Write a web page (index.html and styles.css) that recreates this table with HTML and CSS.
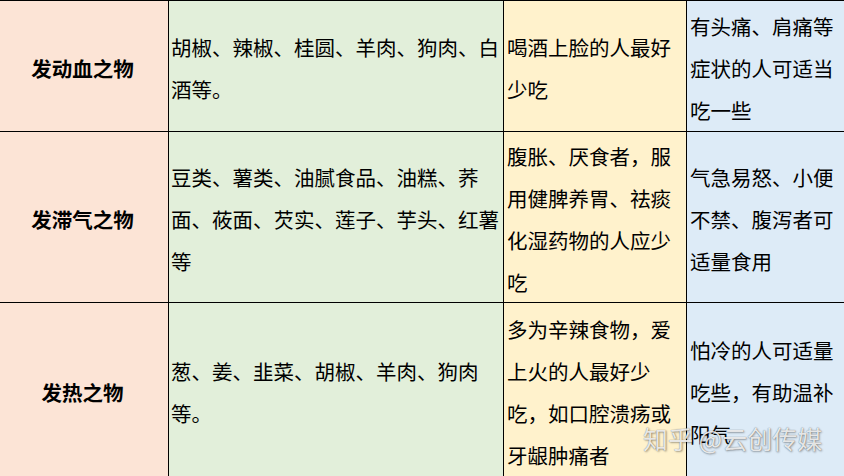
FILE: index.html
```html
<!DOCTYPE html>
<html lang="zh-CN">
<head>
<meta charset="utf-8">
<title>发物表</title>
<link rel="stylesheet" href="styles.css">
</head>
<body>
<div class="sheet">
  <div class="grid">
    <div class="cell c1 head">发动血之物</div>
    <div class="cell c2">胡椒、辣椒、桂圆、羊肉、狗肉、白酒等。</div>
    <div class="cell c3">喝酒上脸的人最好少吃</div>
    <div class="cell c4">有头痛、肩痛等症状的人可适当吃一些</div>

    <div class="cell c1 head">发滞气之物</div>
    <div class="cell c2">豆类、薯类、油腻食品、油糕、荞面、莜面、芡实、莲子、芋头、红薯等</div>
    <div class="cell c3">腹胀、厌食者，服用健脾养胃、祛痰化湿药物的人应少吃</div>
    <div class="cell c4">气急易怒、小便不禁、腹泻者可适量食用</div>

    <div class="cell c1 head">发热之物</div>
    <div class="cell c2">葱、姜、韭菜、胡椒、羊肉、狗肉等。</div>
    <div class="cell c3">多为辛辣食物，爱上火的人最好少吃，如口腔溃疡或牙龈肿痛者</div>
    <div class="cell c4">怕冷的人可适量吃些，有助温补阳气</div>
  </div>
  <div class="watermark">知乎 @云创传媒</div>
</div>
</body>
</html>
```

FILE: styles.css
```css
html, body {
  margin: 0;
  padding: 0;
  width: 844px;
  height: 476px;
  overflow: hidden;
  background: #ffffff;
}

.sheet {
  position: relative;
  width: 844px;
  height: 476px;
  overflow: hidden;
  font-family: "Noto Sans CJK SC", "Noto Sans", sans-serif;
  color: #000;
}

.grid {
  display: grid;
  grid-template-columns: 169px 335px 183px 157px;
  grid-template-rows: 131px 171px 175px;
  border-top: 1px solid #000;
}

.cell {
  box-sizing: border-box;
  border-right: 1px solid #000;
  border-bottom: 1px solid #000;
  padding: 3px 2px 0 3px;
  font-size: 20.5px;
  line-height: 42px;
  display: flex;
  flex-direction: column;
  justify-content: center;
  word-break: break-all;
}

.c1 { background: #fce4d6; }
.c2 { background: #e2efda; padding-left: 2px; }
.c3 { background: #fff2cc; }
.c4 { background: #ddebf7; border-right: none; }

.head {
  font-weight: bold;
  text-align: center;
  padding-left: 0;
  padding-right: 3px;
}

.watermark {
  position: absolute;
  left: 643px;
  top: 426px;
  font-size: 25px;
  line-height: 25px;
  white-space: nowrap;
  color: rgba(255, 255, 255, 0.85);
  text-shadow: 0 0 1px rgba(0, 0, 0, 0.55), 1px 1px 2px rgba(0, 0, 0, 0.3);
}
```
